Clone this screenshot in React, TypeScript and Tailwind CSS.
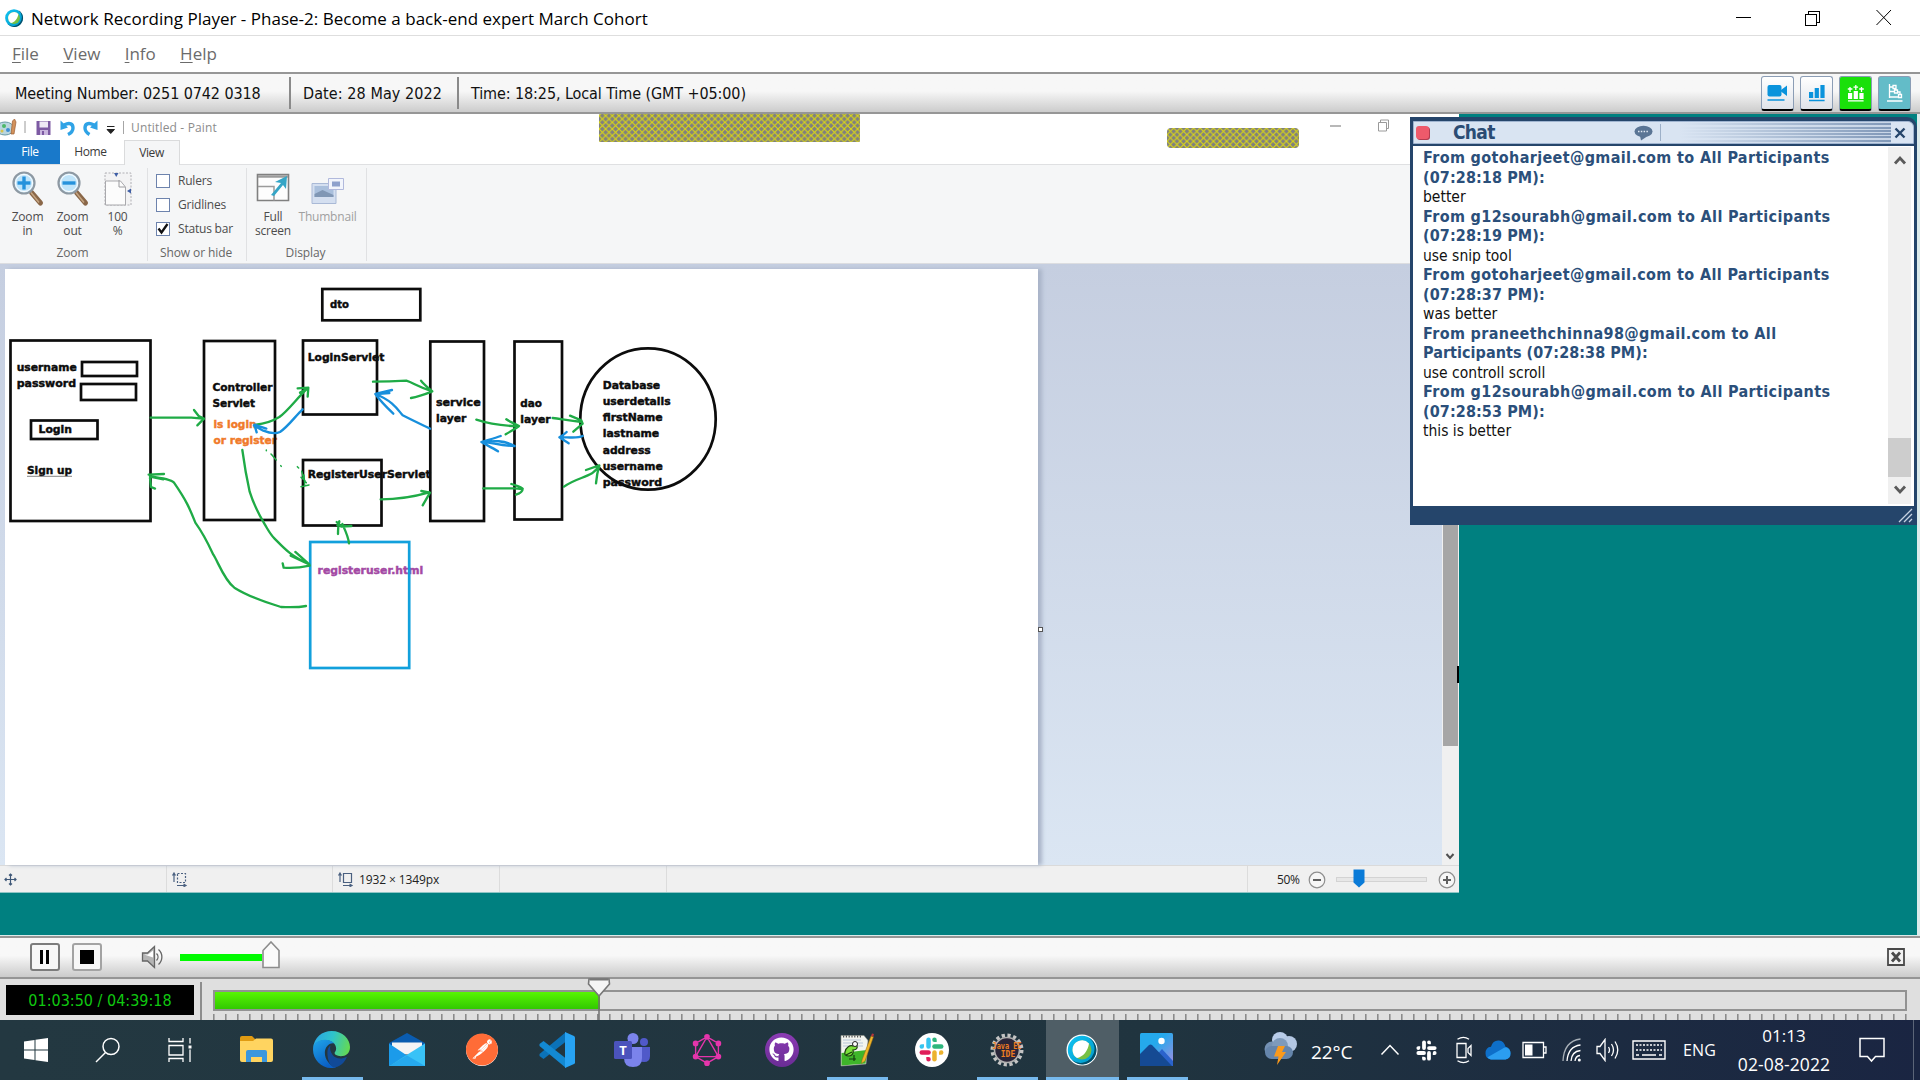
import type { ReactNode } from "react";
import { FaGithub } from "react-icons/fa";
import { SiGraphql, SiPostman } from "react-icons/si";

/* ---------- Title bar and menu ---------- */

function WebexIcon({ size, id }: { size: number; id: string }) {
  return (
    <svg width={size} height={size} viewBox="0 0 32 32">
      <defs>
        <linearGradient id={id} x1="0" y1="0" x2="1" y2="1">
          <stop offset="0" stopColor="#12c3f2" />
          <stop offset="1" stopColor="#0098c9" />
        </linearGradient>
      </defs>
      <circle cx="16" cy="16" r="15.500" fill="#fff" />
      <circle cx="16" cy="16" r="14.200" fill={`url(#${id})`} />
      <path d="M23 3.700A14.200 14.200 0 1 1 6 26a13.500 13.500 0 0 0 17-22.300z" fill="#04506b" />
      <circle cx="16" cy="16" r="9.500" fill="#76c044" />
      <path d="M23 9.500A9.500 9.500 0 0 0 6.500 16 9.500 9.500 0 0 0 11 24c6-1 11-7 12-14.500z" fill="#fff" />
    </svg>
  );
}

function TitleBar() {
  return (
    <div className="flex h-9 items-center border-b border-[#dedede] bg-white">
      <div className="ml-1 h-5 w-5">
        <WebexIcon size={20} id="wx-small" />
      </div>
      <span className="ml-[7px] grow whitespace-nowrap pt-[3px] text-[17px] leading-5 tracking-[0.01px] text-black">
        Network Recording Player - Phase-2: Become a back-end expert March Cohort
      </span>
      <svg className="mr-[26px]" width="160" height="18" viewBox="0 0 160 18" fill="none" stroke="#000" shapeRendering="crispEdges">
        <path d="M2 8.500h15" />
        <path d="M71.500 5.500h11v11h-11zM74.500 5v-2.500h11v11h-3" />
        <path d="M142.500 1l14.500 15M157 1l-14.500 15" shapeRendering="auto" />
      </svg>
    </div>
  );
}

function MenuBar() {
  return (
    <div className="flex h-9 items-center gap-6 bg-white pl-3 text-[17px] leading-5 text-[#6b6b6b]">
      {["File", "View", "Info", "Help"].map((m) => (
        <span key={m} className="mr-[0.300px]">
          <span className="underline underline-offset-2">{m[0]}</span>
          {m.slice(1)}
        </span>
      ))}
    </div>
  );
}

/* ---------- Meeting information bar ---------- */

function PanelButton({ tone, children }: { tone: string; children: ReactNode }) {
  return (
    <div className={`flex h-[35px] w-[33px] items-center justify-center rounded-[3px] border border-b-2 border-[#8b9db5] border-b-black ${tone}`}>
      {children}
    </div>
  );
}

function InfoBar() {
  return (
    <div className="flex h-[42px] items-center border-y-2 border-[#969696] bg-linear-to-b from-[#f7f7f7] from-45% to-[#cccccc] font-['DejaVu_Sans_Condensed'] text-[16px] leading-5 tracking-[-0.1px] text-[#111]">
      <div className="flex h-8 w-[291px] items-center border-r-2 border-[#8a8a8a] pl-[15px] pt-[2px]">Meeting Number: 0251 0742 0318</div>
      <div className="flex h-8 w-[168px] items-center border-r-2 border-[#8a8a8a] pl-[12px] pt-[2px] tracking-[0.08px]">Date: 28 May 2022</div>
      <div className="grow pl-[12px] pt-[2px]">Time: 18:25, Local Time (GMT +05:00)</div>
      <div className="mr-[9px] mt-px flex gap-[6px]">
        <PanelButton tone="bg-linear-to-b from-white to-[#dfe3ea]">
          <svg width="21" height="18" viewBox="0 0 21 18" fill="#0a93dc">
            <rect x="0.500" y="1" width="14" height="11.500" rx="2" />
            <path d="M14 6l6-4.500v10.500l-6-4.500zM0.500 15.200h17v1.600h-17z" />
          </svg>
        </PanelButton>
        <PanelButton tone="bg-linear-to-b from-white to-[#dfe3ea]">
          <svg width="18" height="18" viewBox="0 0 18 18" fill="#0a93dc">
            <path d="M1 8h4.200v6H1zM6.700 4h4.200v10H6.700zM12.400 1h4.200v13h-4.200zM1 15.700h15.600v1.600H1z" />
          </svg>
        </PanelButton>
        <PanelButton tone="bg-[#1ae00a]">
          <svg width="18" height="18" viewBox="0 0 18 18" fill="#fff">
            <path d="M1 9h4.200v6H1zM6.700 7h4.200v8H6.700zM12.400 9h4.200v6h-4.200zM1 16.200h15.600v1.400H1z" />
            <path d="M3 3v5M0.800 5h4.600M8.800 1v5M6.500 3.200h4.600M14.500 3v5M12.200 5h4.600" stroke="#fff" strokeWidth="1.300" />
          </svg>
        </PanelButton>
        <PanelButton tone="bg-[#63bcc8]">
          <svg width="18" height="18" viewBox="0 0 18 18" fill="none" stroke="#fff" strokeWidth="1.300">
            <path d="M3.500 0v14M3.500 3h3M3.500 13h9.500M7 1.500h3v3H7zM8.500 6h3v3h-3zM12.500 10.500h3v3h-3zM3.500 7.500h5M10 4.500V6M14 9v1.500M11.500 8h2.500v1M1 17h15.500" />
          </svg>
        </PanelButton>
      </div>
    </div>
  );
}

/* ---------- Shared Paint window ---------- */

function Hatch({ w, h, rx, dy, id }: { w: number; h: number; rx: number; dy: number; id: string }) {
  return (
    <svg width={w} height={h}>
      <defs>
        <pattern id={id} width="6.630" height="6.630" patternUnits="userSpaceOnUse" y={dy}>
          <rect width="7" height="7" fill="#7f7f80" />
          <path d="M-1-1l9 9M-1 7.630l9-9" stroke="#dbd714" strokeWidth="1.150" />
        </pattern>
      </defs>
      <rect width={w} height={h} rx={rx} fill={`url(#${id})`} />
    </svg>
  );
}

function PaintTitle() {
  return (
    <div className="relative flex h-[26px] items-center bg-white pt-px text-[12px] text-[#8c8c8c]">
      <svg width="120" height="19" viewBox="0 0 120 19">
        <ellipse cx="5" cy="10.500" rx="9" ry="6.500" fill="#b9d6df" stroke="#6a9aa5" />
        <circle cx="4" cy="8" r="2" fill="#4db868" />
        <circle cx="8" cy="12" r="2" fill="#3f8fd4" />
        <circle cx="2" cy="13" r="1.500" fill="#d8c34a" />
        <path d="M11 16l1.500-13 2-2 1.500 3-2 12z" fill="#d2925c" stroke="#9c5e35" strokeWidth="0.700" />
        <path d="M25 3v12" stroke="#9a9a9a" strokeWidth="1" />
        <path d="M36.500 3h14v14h-14z" fill="#7d5aa3" />
        <path d="M39.500 3.500h8.500v6h-8.500z" fill="#eee8f5" />
        <path d="M40 12h8v5h-8z" fill="#c9b6de" />
        <path d="M42 13h2v4h-2z" fill="#7d5aa3" />
        <path d="M64 7c6-3 9-1 9 3 0 3-2 5-5 6.500" fill="none" stroke="#2fa3e6" strokeWidth="3.400" />
        <path d="M60.500 2.500v9.500l7.500-2.500z" fill="#2fa3e6" />
        <path d="M94 7c-6-3-9-1-9 3 0 3 2 5 4.500 6.500" fill="none" stroke="#2fa3e6" strokeWidth="3.400" />
        <path d="M97.500 2.500v9.500l-7.500-2.500z" fill="#2fa3e6" />
        <path d="M107 8.500h7.500M107 11.500h7.500l-3.750 4z" stroke="#222" fill="#222" strokeWidth="1" />
      </svg>
      <span className="ml-[3px] h-[13px] w-px bg-[#a5a5a5]" />
      <span className="ml-[7px] tracking-[0.16px]">Untitled - Paint</span>
      <div className="absolute left-[599px] top-0">
        <Hatch w={261} h={28} rx={1} dy={1.7} id="hatch-a" />
      </div>
      <div className="absolute left-[1167px] top-[14px]">
        <Hatch w={132} h={20} rx={4} dy={0} id="hatch-b" />
      </div>
      <svg className="absolute left-[1328px] top-1" width="64" height="16" viewBox="0 0 64 16" fill="none" stroke="#9a9a9a">
        <path d="M2 8h11" strokeWidth="1.400" />
        <path d="M50.500 4.500h8v8.500h-8zM52.500 4v-2h8v8.500h-2" />
      </svg>
    </div>
  );
}

function PaintTabs() {
  return (
    <div className="flex h-[25px] border-b border-[#dfe0e2] bg-white text-[12px] tracking-[-0.4px]">
      <div className="flex w-[60px] items-center justify-center bg-[#1979ca] text-white">File</div>
      <div className="flex w-16 items-center justify-center pr-[3px] text-[#3a3a3a]">Home</div>
      <div className="-mb-px flex w-[56px] items-center justify-center border border-b-0 border-[#dadbdc] bg-[#f5f6f7] pr-[1px] text-[#3a3a3a]">View</div>
    </div>
  );
}

function Magnifier({ plus }: { plus?: boolean }) {
  return (
    <svg width="34" height="36" viewBox="0 0 34 36">
      <path d="M20.500 21.500l9 10.500" stroke="#8a6748" strokeWidth="5" strokeLinecap="round" />
      <path d="M20 21.500l8 10" stroke="#c5a582" strokeWidth="1.500" />
      <circle cx="13" cy="12" r="10.500" fill="#cdeafb" stroke="#8e99a3" strokeWidth="2.200" />
      <circle cx="13" cy="12" r="8.500" fill="#bfe4fa" stroke="#fff" strokeWidth="1" />
      <path d="M6.500 12h13" stroke="#2692dc" strokeWidth="3.400" />
      {plus && <path d="M13 5.500v13" stroke="#2692dc" strokeWidth="3.400" />}
    </svg>
  );
}

function PageIcon() {
  return (
    <svg width="34" height="36" viewBox="0 0 34 36">
      <path d="M4 2h26v32H4z" fill="#f3f3f4" stroke="#a0a0a5" strokeWidth="0.800" strokeDasharray="2 1.500" />
      <path d="M4.500 10h15l5 6v18h-20z" fill="#fcfcfc" stroke="#a9a9ad" />
      <path d="M18 9v7h6" fill="none" stroke="#9a9a9e" />
      <path d="M13 2h4.500l-2.250 4zM30 17.500v5l-4-2.500z" fill="#3f5fa6" />
    </svg>
  );
}

function FullScreenIcon() {
  return (
    <svg width="34" height="36" viewBox="0 0 34 36">
      <path d="M1.500 3.500h31v26h-31z" fill="#fdfdfd" stroke="#808080" strokeWidth="1.600" />
      <path d="M2 5.500h30" stroke="#9b9b9b" strokeWidth="2.500" />
      <path d="M2 15.500h16v14" fill="none" stroke="#9b9b9b" strokeWidth="1.500" />
      <path d="M15 24l10-12-6-1 12-6-1 13-3-4-9 11z" fill="#35a5c6" />
    </svg>
  );
}

function ThumbnailIcon() {
  return (
    <svg width="36" height="36" viewBox="0 0 36 36">
      <path d="M2 12.500h24v20H2z" fill="#d4dff0" stroke="#a9b9d6" />
      <path d="M4.500 15h19v11h-19z" fill="#a9bfdc" />
      <path d="M4.500 23l8-4 11 5v2h-19z" fill="#8097b5" />
      <path d="M18.500 7.500h15v11h-15z" fill="#f2f5fc" stroke="#b1b9dc" />
      <path d="M22 10.500h8v5h-8z" fill="#8ea1cc" />
    </svg>
  );
}

function Tool({ icon, lines, className }: { icon: ReactNode; lines: string[]; className: string }) {
  return (
    <div className={`flex flex-col items-center whitespace-nowrap leading-[14px] ${className}`}>
      {icon}
      <div className="mt-[3px] text-center">
        {lines.map((l) => (
          <div key={l}>{l}</div>
        ))}
      </div>
    </div>
  );
}

function Group({ label, className, children }: { label: string; className: string; children: ReactNode }) {
  return (
    <div className={`mb-[2px] mt-[3px] flex flex-col border-r border-[#e0e1e3] ${className}`}>
      <div className="flex grow">{children}</div>
      <div className="pr-[2px] text-center leading-[17px] tracking-[-0.1px] text-[#666]">{label}</div>
    </div>
  );
}

function Check({ label, on }: { label: string; on?: boolean }) {
  return (
    <div className="flex h-6 items-center gap-2">
      <span className="flex h-[14px] w-[14px] items-center justify-center border border-[#6d83ad] bg-white">
        {on && (
          <svg width="12" height="12" viewBox="0 0 12 12" fill="none" stroke="#111" strokeWidth="2.300">
            <path d="M1.500 5.500l3 4 6-8.500" />
          </svg>
        )}
      </span>
      {label}
    </div>
  );
}

function Ribbon() {
  return (
    <div className="flex h-[99px] border-b border-[#dcdde0] bg-[#f5f6f7] text-[12px] tracking-[-0.2px] text-[#4c4c4c]">
      <Group label="Zoom" className="w-[148px]">
        <div className="flex pl-[5px] pt-[3px]">
          <Tool icon={<Magnifier plus />} lines={["Zoom", "in"]} className="w-[45px]" />
          <Tool icon={<Magnifier />} lines={["Zoom", "out"]} className="w-[45px]" />
          <Tool icon={<PageIcon />} lines={["100", "%"]} className="w-[45px]" />
        </div>
      </Group>
      <Group label="Show or hide" className="w-[99px]">
        <div className="pl-2 pt-[1px]">
          <Check label="Rulers" />
          <Check label="Gridlines" />
          <Check label="Status bar" on />
        </div>
      </Group>
      <Group label="Display" className="w-[120px]">
        <div className="flex pt-[3px]">
          <Tool icon={<FullScreenIcon />} lines={["Full", "screen"]} className="w-[52px]" />
          <Tool icon={<ThumbnailIcon />} lines={["Thumbnail"]} className="w-[57px] text-[#a0a0a0]" />
        </div>
      </Group>
    </div>
  );
}

/* Free-hand diagram drawn on the Paint canvas */
const boxes: [number, number, number, number, string][] = [
  [10.5, 340.5, 140, 180.5, "#0c0c0c"],
  [82, 362, 55, 14, "#0c0c0c"],
  [81, 384, 55, 16, "#0c0c0c"],
  [31, 420.5, 66.5, 18.5, "#0c0c0c"],
  [204, 341, 71, 179, "#0c0c0c"],
  [303, 340.5, 74, 74, "#0c0c0c"],
  [322.3, 289, 98, 31.3, "#0c0c0c"],
  [303, 460, 78.5, 65.5, "#0c0c0c"],
  [310.2, 542, 99, 126, "#12a0dc"],
  [430.3, 341.5, 53.7, 179.5, "#0c0c0c"],
  [514.5, 341.5, 47.5, 178, "#0c0c0c"],
];

const labels: [string, number, number, number, string][] = [
  ["username", 16.7, 371, 60, "#0c0c0c"],
  ["password", 16.7, 387, 59.5, "#0c0c0c"],
  ["Login", 38.5, 433, 33.5, "#0c0c0c"],
  ["Sign up", 27, 474.3, 45, "#0c0c0c"],
  ["Controller", 212.5, 391.2, 60, "#0c0c0c"],
  ["Servlet", 212.5, 407.2, 42.5, "#0c0c0c"],
  ["is login", 213.5, 428.2, 43, "#f07a2a"],
  ["or register", 213.5, 444.3, 63.5, "#f07a2a"],
  ["LoginServlet", 307.7, 361, 76.7, "#0c0c0c"],
  ["RegisterUserServlet", 307.7, 478, 123, "#0c0c0c"],
  ["dto", 330, 308, 19, "#0c0c0c"],
  ["registeruser.html", 317.6, 574, 105.5, "#a349a4"],
  ["service", 436, 406, 44.7, "#0c0c0c"],
  ["layer", 436, 422, 30.3, "#0c0c0c"],
  ["dao", 520.3, 407, 21.7, "#0c0c0c"],
  ["layer", 520.3, 423, 30.3, "#0c0c0c"],
  ["Database", 602.7, 389.3, 57.5, "#0c0c0c"],
  ["userdetails", 602.7, 405.4, 68, "#0c0c0c"],
  ["firstName", 602.7, 421.4, 60, "#0c0c0c"],
  ["lastname", 602.7, 437.4, 56.5, "#0c0c0c"],
  ["address", 602.7, 453.5, 48, "#0c0c0c"],
  ["username", 602.7, 469.5, 60, "#0c0c0c"],
  ["password", 602.7, 485.5, 59.5, "#0c0c0c"],
];

function Diagram() {
  return (
    <svg width="1032" height="597" viewBox="6 269 1032 597" fill="none" className="block">
      <g fontFamily="DejaVu Sans, sans-serif" fontWeight="700" fontSize="11" strokeWidth="0.450">
        {labels.map(([t, x, y, w, c], i) => (
          <text key={i} x={x} y={y} textLength={w} lengthAdjust="spacingAndGlyphs" fill={c} stroke={c}>
            {t}
          </text>
        ))}
      </g>
      {boxes.map(([x, y, w, h, c], i) => (
        <rect key={i} x={x} y={y} width={w} height={h} stroke={c} strokeWidth="2.700" />
      ))}
      <ellipse cx="648" cy="419" rx="67.700" ry="70.700" stroke="#0c0c0c" strokeWidth="2.700" />
      <path d="M27 476.300h45" stroke="#777" strokeWidth="0.900" />
      <g transform="translate(0 260) scale(.33333)" strokeWidth="7" strokeLinecap="round" strokeLinejoin="round">
        <g stroke="#1fab46">
          <path d="M452 473h122l35 3M582 450l14 18 16 8-20 20" />
          <path d="M768 494c30-3 50-11 70-23 25-18 48-50 78-80M893 385l32-2-2 27M900 398l20-10" />
          <path d="M727 570c8 60 12 80 22 125 14 45 30 72 44 96 15 25 18 32 30 44 30 30 45 50 105 78M886 876l42 37-56-26M848 910l3 13c26 2 50 0 78-6" />
          <path d="M918 1038c-25 5-50 4-75 3-40-12-95-30-140-58-30-22-50-80-63-99-14-30-35-70-54-96-16-40-24-62-64-120-10-10-32-14-70-18M446 644l46-2M450 650l40 8M450 654l3 27 12 5" />
          <path d="M1047 850c-2-20-10-36-20-58M1018 786c-4 12-4 20-4 36M1010 786l14 14 30-2M1018 784l-6 12 24 2" />
          <path d="M799 570v2M813 582c5 5 10 12 16 18M842 617l2 2M892 620l4 4M905 634c5 14 4 26 14 34M903 652l12 10M903 680l24-5M912 645l2 30" strokeWidth="4.500" />
        </g>
        <path d="M908 448c-20 18-42 50-68 68-16 7-30 4-50-4l-28-15M763 494l36 12M764 497l6 20" stroke="#178fdc" />
      </g>
      <g transform="translate(280 260) scale(.33333)" strokeWidth="7" strokeLinecap="round" strokeLinejoin="round">
        <g stroke="#1fab46">
          <path d="M279 365c35 0 66-1 100-3 25 8 24 14 78 32M423 362c8 12 20 20 34 32-20 8-40 16-64 20" />
          <path d="M589 479c30 10 70 18 126 20M679 478c12 8 24 12 38 20-12 10-26 16-40 25" />
          <path d="M818 474c30 4 50 8 88 12M870 467l34 14 4 10-28 24" />
          <path d="M302 718c50 0 90-5 146-21M424 693l26 5-22 38" />
          <path d="M610 685h90c12 0 20 1 26 2M694 672c18 6 30 8 34 14 0 8-8 14-20 18" />
          <path d="M852 680c30-22 60-26 84-40 10-8 16-14 22-22M918 630l40-14c-6 20-8 32-10 54" />
        </g>
        <g stroke="#178fdc">
          <path d="M450 506c-25-12-55-26-82-40-14-16-30-44-82-64M336 390l-50 12c16 22 34 40 54 59M288 402l40-3" />
          <path d="M704 558c-34-18-60-16-98-12M662 528c-20 8-40 12-58 18 14 8 34 18 50 28M610 546c30 2 50 12 94 12" />
          <path d="M908 528c-16 8-36 4-68 3M860 516c-8 8-14 12-22 16l28 18" />
        </g>
      </g>
    </svg>
  );
}

function StatusIcon({ dashed }: { dashed?: boolean }) {
  return (
    <svg width="16" height="15" viewBox="0 0 16 15" fill="none" stroke="#4a6080" strokeWidth="1.200">
      <path d="M2 1v9M0.500 3.500L2 1l1.500 2.500M5 13.500h8M11.500 12l2.500 1.500-2.500 1.300" />
      <path d="M5.500 1.500h8v9h-8z" strokeDasharray={dashed ? "2 1.500" : undefined} />
    </svg>
  );
}

function ZoomKnob({ plus }: { plus?: boolean }) {
  return (
    <svg width="18" height="18" viewBox="0 0 18 18" fill="none">
      <circle cx="9" cy="9" r="7.800" fill="#f6f6f6" stroke="#8e8e8e" strokeWidth="1.200" />
      <path d={plus ? "M5 9h8M9 5v8" : "M5 9h8"} stroke="#606060" strokeWidth="2" />
    </svg>
  );
}

function PaintWindow() {
  return (
    <div className="relative flex h-[779px] w-[1459px] flex-col bg-white">
      <PaintTitle />
      <PaintTabs />
      <Ribbon />
      <div className="flex h-[601px]">
        <div className="relative grow bg-linear-to-b from-[#c5cee0] to-[#dbe6f3] pl-[5px] pt-[5px]">
          <div className="h-[596px] w-[1033px] overflow-hidden bg-white pl-px shadow-[4px_0px_4px_#a9b4c8]">
            <Diagram />
          </div>
          <span className="absolute left-[1038px] top-[363px] h-[5px] w-[5px] border border-[#555] bg-white" />
        </div>
        <div className="flex w-[17px] flex-col bg-[#f0f0f0]">
          <div className="mx-px mt-4 h-[466px] bg-[#a6a6a6]" />
          <div className="grow" />
          <svg className="mb-1 ml-[3px]" width="10" height="10" viewBox="0 0 10 10" fill="none" stroke="#505050" strokeWidth="2">
            <path d="M1.500 3l3.500 4 3.500-4" />
          </svg>
        </div>
      </div>
      <div className="flex h-[28px] items-center border-b border-t border-[#dadada] border-b-[#8fc5c5] bg-[#f0f0f0] text-[12px] text-[#222]">
        <div className="flex h-full w-[167px] items-center border-r border-[#dcdcdc] pl-1">
          <svg width="13" height="13" viewBox="0 0 13 13" fill="none" stroke="#3f5878" strokeWidth="1.200">
            <path d="M6.500 1v11M1 6.500h11M5 2.500L6.500 1 8 2.500M5 10.500L6.500 12 8 10.500M2.500 5L1 6.500 2.500 8M10.500 5L12 6.500 10.500 8" />
          </svg>
        </div>
        <div className="flex h-full w-[166px] items-center border-r border-[#dcdcdc] pl-[5px]">
          <StatusIcon dashed />
        </div>
        <div className="flex h-full w-[167px] items-center gap-[5px] border-r border-[#dcdcdc] pl-[5px] pt-px tracking-[-0.12px]">
          <StatusIcon />
          1932 × 1349px
        </div>
        <div className="h-full w-[167px] border-r border-[#dcdcdc]" />
        <div className="h-full w-[581px] border-r border-[#dcdcdc]" />
        <div className="flex items-center pl-[29px] pt-px">
          <span className="w-[31px] tracking-[-0.3px]">50%</span>
          <ZoomKnob />
          <div className="relative ml-[10px] mr-[11px] h-[5px] w-[91px] border border-[#d3d3d3] bg-[#e7e7e7]">
            <svg className="absolute -top-[9px] left-[16px]" width="12" height="19" viewBox="0 0 12 19">
              <path d="M0.500 0.500h11v13l-5.500 5-5.500-5z" fill="#0a7bd8" />
            </svg>
          </div>
          <ZoomKnob plus />
        </div>
      </div>
      <span className="absolute left-[1457px] top-[552px] h-[17px] w-[2px] bg-black" />
    </div>
  );
}

/* ---------- Chat panel ---------- */

const messages: [string[], string][] = [
  [["From gotoharjeet@gmail.com to All Participants", "(07:28:18 PM):"], "better"],
  [["From g12sourabh@gmail.com to All Participants", "(07:28:19 PM):"], "use snip tool"],
  [["From gotoharjeet@gmail.com to All Participants", "(07:28:37 PM):"], "was better"],
  [["From praneethchinna98@gmail.com to All", "Participants (07:28:38 PM):"], "use controll scroll"],
  [["From g12sourabh@gmail.com to All Participants", "(07:28:53 PM):"], "this is better"],
];

function ChatPanel() {
  return (
    <div className="absolute left-[1410px] top-[3px] flex h-[408px] w-[507px] flex-col rounded-tr-[10px] border-x-3 border-t-4 border-[#25456b] bg-[#25456b] font-['DejaVu_Sans_Condensed']">
      <div className="flex h-[23px] items-center overflow-hidden rounded-tr-[6px] border border-[#9fb4d0] bg-[#d9e4f2]">
        <span className="ml-[2px] h-[13px] w-[13px] rounded-[3px] bg-[#ee5a6b] shadow-[1px_1px_0_#b23c50]" />
        <span className="ml-6 w-[181px] text-[19px] font-bold leading-none tracking-[-0.7px] text-[#2b4c74]">Chat</span>
        <svg width="20" height="16" viewBox="0 0 20 16">
          <ellipse cx="9.500" cy="6.500" rx="9" ry="5.800" fill="#5a7595" />
          <path d="M6 11l1 4.500 6-4z" fill="#5a7595" />
          <path d="M4 6.500h11" stroke="#dfe8f3" strokeWidth="1.400" strokeDasharray="1.500 1.300" />
        </svg>
        <span className="ml-[6px] h-[17px] w-px bg-[#9db0c8]" />
        <div className="h-full grow bg-[linear-gradient(90deg,#d9e4f2_8%,#d9e4f200_100%),repeating-linear-gradient(180deg,#c9d6e7_0px,#c9d6e7_1.3px,#8098b8_1.3px,#8098b8_3.3px)]" />
        <svg className="ml-[3px] mr-[7px]" width="12" height="12" viewBox="0 0 12 12" stroke="#25456b" strokeWidth="2.400">
          <path d="M1.500 1.500l9 9M10.500 1.500l-9 9" />
        </svg>
      </div>
      <div className="mt-[2px] flex h-[360px] bg-white">
        <div className="grow whitespace-nowrap pl-[10px] pt-[2px] text-[15.5px] leading-[19.5px] text-[#111]">
          {messages.map(([head, body], i) => (
            <div key={i}>
              {head.map((h) => (
                <div key={h} className={`text-[16px] font-bold text-[#2b4f7a] ${h.startsWith("(") ? "tracking-[0.1px]" : h.startsWith("P") ? "tracking-[0.05px]" : "tracking-[0.36px]"}`}>
                  {h}
                </div>
              ))}
              <div className="relative top-px">{body}</div>
            </div>
          ))}
        </div>
        <div className="mr-[3px] mt-px flex h-[357px] w-[23px] flex-col items-center bg-[#f0f0f0]">
          <svg className="mt-[7px]" width="14" height="12" viewBox="0 0 14 12" fill="none" stroke="#5a5a5a" strokeWidth="2.800">
            <path d="M2 9.500l5-5.500 5 5.500" />
          </svg>
          <div className="mt-[272px] h-[39px] w-full bg-[#cdcdcd]" />
          <svg className="mt-[7px]" width="14" height="12" viewBox="0 0 14 12" fill="none" stroke="#5a5a5a" strokeWidth="2.800">
            <path d="M2 2.500l5 5.500 5-5.500" />
          </svg>
        </div>
      </div>
      <svg className="ml-auto mt-[2px]" width="16" height="15" viewBox="0 0 16 15" stroke="#c6d2e2" strokeWidth="1.300">
        <path d="M1 14L14 1M6 14l8-8M11 14l3-3" />
      </svg>
    </div>
  );
}

/* ---------- Player controls ---------- */

function Controls() {
  return (
    <div className="flex h-[43px] items-center border-b-2 border-t-2 border-[#959595] bg-linear-to-b from-[#f8f8f8] from-45% to-[#cbcbcb]">
      <div className="-mt-px ml-[30px] flex h-7 w-[30px] items-center justify-center gap-[3px] rounded-[3px] border-2 border-[#7c7c7c] bg-[#f7f7f7] pr-px">
        <span className="h-[14px] w-[3px] bg-black" />
        <span className="h-[14px] w-[3px] bg-black" />
      </div>
      <div className="-mt-px ml-3 flex h-7 w-[30px] items-center justify-center rounded-[3px] border-2 border-[#a3a3a3] bg-[#f7f7f7] pr-px">
        <span className="h-[14px] w-[14px] bg-black" />
      </div>
      <svg className="-mt-[2px] ml-[39px]" width="23" height="24" viewBox="0 0 23 24" fill="none" stroke="#666" strokeWidth="1.300">
        <path d="M1.500 8h5l7-6.500v21l-7-6.500h-5z" fill="#b5b5b5" />
        <path d="M3 9.500h4l5-4v7z" fill="#fff" stroke="none" />
        <path d="M15.500 8.500c2 2 2 5 0 7M17.500 4.500c4.500 4 4.500 11 0 15" />
      </svg>
      <div className="ml-[16px] h-[7px] w-[82px] bg-[#00fb00]" />
      <svg className="-mt-[5px]" width="18" height="28" viewBox="0 0 18 28">
        <path d="M1 26.500v-17L9 1l8 8.500v17z" fill="#fafafa" stroke="#8c8c8c" strokeWidth="1.600" />
      </svg>
      <svg className="-mt-px ml-auto mr-[15px]" width="18" height="18" viewBox="0 0 18 18" fill="#f2f2f2" stroke="#4a4a4a">
        <path d="M1 1h16v16H1z" strokeWidth="1.800" />
        <path d="M5 4.500l8 9M13 4.500l-8 9" strokeWidth="2.800" />
      </svg>
    </div>
  );
}

const ticks = Array.from({ length: 142 }, (_, i) => 0.8 + i * 12);

function Timeline() {
  return (
    <div className="flex h-[41px] bg-[#dfdfdf]">
      <div className="ml-[6px] mt-[6px] flex h-[30px] w-[188px] items-center justify-center bg-black pt-px font-['DejaVu_Sans_Condensed'] text-[16px] text-[#10c810]">
        01:03:50 / 04:39:18
      </div>
      <div className="ml-[6px] mt-[3px] h-[38px] w-[2px] bg-[#8d8d8d]" />
      <div className="relative ml-[11px] w-[1694px]">
        <div className="mt-[11px] h-[21px] border-2 border-[#929292]">
          <div className="h-full w-[385px] bg-linear-to-b from-[#57f503] to-[#31c900]" />
        </div>
        <svg className="mt-[3px] block" width="1694" height="6">
          {ticks.map((x) => (
            <path key={x} d={`M${x} 0v6`} stroke="#8b8b8b" strokeWidth="1.600" />
          ))}
        </svg>
        <svg className="absolute -top-px left-[374px]" width="24" height="42" viewBox="0 0 24 42">
          <path d="M12 16v26" stroke="#6f6f6f" strokeWidth="1.500" />
          <path d="M2 1h20l0.500 5-10.500 12L1.500 6z" fill="#f5f5f5" stroke="#777" strokeWidth="1.600" />
          <path d="M3 1.500h18" stroke="#777" strokeWidth="2" />
        </svg>
      </div>
    </div>
  );
}

/* ---------- Windows taskbar ---------- */

function StartIcon() {
  return (
    <svg width="24" height="24" viewBox="0 0 24 24" fill="#fff">
      <path d="M0 3.500L10.500 2v9.500H0zM11.500 1.800L24 0v11.500H11.500zM0 12.500h10.500V22L0 20.500zM11.500 12.500H24V24l-12.500-1.800z" />
    </svg>
  );
}

function SearchIcon() {
  return (
    <svg width="26" height="26" viewBox="0 0 26 26" fill="none" stroke="#fff" strokeWidth="1.500">
      <circle cx="16" cy="9.500" r="8" />
      <path d="M10.500 15.500L1 25" />
    </svg>
  );
}

function TaskViewIcon() {
  return (
    <svg width="24" height="24" viewBox="0 0 24 24" fill="none" stroke="#fff" strokeWidth="1.300">
      <path d="M1 0v3.500h14V0M1 24v-3.500h14V24M1 7.500h14v9.500H1zM22 0v5.500M22 11.500V24" />
      <path d="M20.500 7.500h3v3h-3z" fill="#fff" stroke="none" />
    </svg>
  );
}

function ExplorerIcon() {
  return (
    <svg width="33" height="27" viewBox="0 0 33 27">
      <path d="M0 2q0-2 2-2h10l3 3v5H0z" fill="#e09b12" />
      <path d="M0 5h13l3-2.500h15q2 0 2 2V24q0 2-2 2H2q-2 0-2-2z" fill="#ffd460" />
      <path d="M6 26V16q0-2 2-2h17q2 0 2 2v10h-5v-5H11v5z" fill="#3b97dd" />
    </svg>
  );
}

function EdgeIcon() {
  return (
    <svg width="37" height="37" viewBox="0 0 36 36">
      <defs>
        <linearGradient id="edge-top" x1="0" y1="0.300" x2="1" y2="0.500">
          <stop offset="0" stopColor="#2aa5e4" />
          <stop offset="0.500" stopColor="#2fc4cb" />
          <stop offset="1" stopColor="#63d955" />
        </linearGradient>
        <linearGradient id="edge-mid" x1="0" y1="0" x2="0.500" y2="1">
          <stop offset="0" stopColor="#1fa5ea" />
          <stop offset="1" stopColor="#0a5fc4" />
        </linearGradient>
      </defs>
      <path d="M0 17C1 6 9 0 18 0c11 0 18 8 18 15.500 0 6-4 9-9 9-4 0-6-1.500-6-3 0-1 1.500-2 1.500-4.500 0-5-5-8-10.500-8C6 9 1.500 12 0 17z" fill="url(#edge-top)" />
      <path d="M0 18c0-6 5-9.500 11.500-9.500 4 0 7 1.200 9 3.500-5-1-9 4-9 9 0 7 5 13 11 14.500-2 .5-4 .5-5 .5C8 36 0 28 0 18z" fill="url(#edge-mid)" />
      <path d="M14 21c0-3 1-5.500 3-7-1 3 0 6 2 9 3 4 8 5 14 2-2 6-8 10.500-13 10.500-4-2-6-8-6-14.500z" fill="#114a97" />
    </svg>
  );
}

function MailIcon() {
  return (
    <svg width="36" height="33" viewBox="0 0 36 33">
      <path d="M0 10L18 0l18 10v4H0z" fill="#0a5cb0" />
      <path d="M3 9.500h30v12H3z" fill="#f4f4f5" />
      <path d="M0 10.500l18 12L0 33z" fill="#1b9bea" />
      <path d="M36 10.500V33H0z" fill="#39c2f7" />
      <path d="M0 33l18-10.500L36 33z" fill="#26a9ee" />
    </svg>
  );
}

function PostmanIcon() {
  return (
    <span className="flex h-[32px] w-[32px] items-center justify-center rounded-full bg-white">
      <SiPostman size={33} color="#ff6c37" />
    </span>
  );
}

function VsCodeIcon() {
  return (
    <svg width="36" height="36" viewBox="0 0 36 36">
      <path d="M27 0v9.500L4.500 27 0.500 24v-2z" fill="#0b72b8" />
      <path d="M27 36v-9.500L4.500 9 0.500 12v2z" fill="#1389d2" />
      <path d="M26 0l9 4q1 .5 1 1.500v25q0 1-1 1.500l-9 4z" fill="#27a3f3" />
    </svg>
  );
}

function TeamsIcon() {
  return (
    <svg width="36" height="34" viewBox="0 0 36 34">
      <circle cx="30" cy="9" r="4" fill="#5059c9" />
      <path d="M24 14h12v9q0 6-6 6t-6-6z" fill="#5059c9" />
      <circle cx="19" cy="5.500" r="5.500" fill="#7b83eb" />
      <path d="M10 14h18v11q0 9-9 9t-9-9z" fill="#7b83eb" />
      <rect y="8" width="18" height="18" rx="1.500" fill="#4b53bc" />
      <text x="9" y="21.500" textAnchor="middle" fontFamily="Open Sans, sans-serif" fontWeight="700" fontSize="13" fill="#fff">
        T
      </text>
    </svg>
  );
}

function NotepadIcon() {
  return (
    <svg width="34" height="34" viewBox="0 0 34 34">
      <path d="M1 2.500h23l4 5-2 23.500-25 2z" fill="#f2f4ef" stroke="#8d9288" strokeWidth="0.600" />
      <path d="M1.500 20l25.500-3-1.500 13.500-24 2z" fill="#3fb52a" />
      <path d="M3 7h18M3 10h20M3 13h20" stroke="#b7c6d8" />
      <path d="M3 3.500h19" stroke="#555" strokeWidth="2" strokeDasharray="1.200 1.600" />
      <path d="M5 19c1-5 5-7 8-6 1-3 4-2 4 0 1 3-2 4-4 4 1 3-1 6-4 6s-5-1-4-4z" fill="#7be03a" stroke="#1c3a12" strokeWidth="1.200" />
      <circle cx="15" cy="11" r="2.500" fill="#fff" stroke="#222" />
      <path d="M9 26h7M14 22v6M6 22l6-3" stroke="#153d10" strokeWidth="1.200" />
      <path d="M22 27l9-24 2.500.8L25 28l-3.500 2.500z" fill="#f0b429" stroke="#8a6514" strokeWidth="0.500" />
      <path d="M31 3l1-2.500 2 .6-.8 2.600z" fill="#b7353a" />
    </svg>
  );
}

function SlackMark({ size, colors }: { size: number; colors: [string, string, string, string] }) {
  const arm = (c: string, deg: number) => (
    <g fill={c} transform={`rotate(${deg} 12 12)`}>
      <rect x="7" y="0.500" width="4.300" height="10.800" rx="2.150" />
      <path d="M0.500 9.150a2.150 2.150 0 0 1 2.150-2.150h2.150v2.150a2.150 2.150 0 0 1-4.300 0z" />
    </g>
  );
  return (
    <svg width={size} height={size} viewBox="0 0 24 24">
      {arm(colors[0], 90)}
      {arm(colors[1], 180)}
      {arm(colors[2], 270)}
      {arm(colors[3], 0)}
    </svg>
  );
}

function JavaIdeIcon() {
  return (
    <svg width="34" height="34" viewBox="0 0 34 34">
      <circle cx="17" cy="17" r="14.700" fill="none" stroke="#c4c4c4" strokeWidth="3.600" strokeDasharray="3.200 2.573" />
      <circle cx="17" cy="17" r="12.500" fill="#2a2538" stroke="#b0b0b0" strokeWidth="1.600" />
      <g fontFamily="DejaVu Sans Mono, monospace" fontWeight="700" fontSize="8" fill="#ee7d22" textAnchor="middle">
        <text x="17" y="15.500" textLength="29" lengthAdjust="spacingAndGlyphs">
          Java EE
        </text>
        <text x="18" y="24">
          IDE
        </text>
      </g>
    </svg>
  );
}

function PhotosIcon() {
  return (
    <svg width="33" height="33" viewBox="0 0 33 33">
      <defs>
        <linearGradient id="photo-sky" x1="0" y1="0" x2="1" y2="1">
          <stop offset="0.400" stopColor="#25a9ec" />
          <stop offset="1" stopColor="#a58be0" />
        </linearGradient>
      </defs>
      <rect width="33" height="33" rx="1.500" fill="url(#photo-sky)" />
      <path d="M14 25l8-9 11 12v5H14z" fill="#2b63cc" />
      <path d="M0 21l9-9q1.500-1 3 0l20 21H0z" fill="#154a93" />
      <circle cx="21.500" cy="8" r="3.200" fill="#fff" />
    </svg>
  );
}

function TaskButton({ children, open, active }: { children: ReactNode; open?: boolean; active?: boolean }) {
  return (
    <div className={`mx-px flex h-full w-[73px] flex-col items-center ${active ? "bg-[#4f5e66]" : ""}`}>
      <div className="flex h-[57px] items-center justify-center pr-[2px] pt-[2px]">{children}</div>
      {(open || active) && <div className={`h-[3px] bg-[#76b9ed] ${active ? "w-full" : "w-[61px]"}`} />}
    </div>
  );
}

function Tray() {
  return (
    <div className="flex grow items-center whitespace-nowrap pl-[69px] text-white">
      <svg className="-mt-[3px]" width="34" height="36" viewBox="0 0 34 36">
        <circle cx="16" cy="9" r="8" fill="#b9cdea" />
        <circle cx="25" cy="13" r="8" fill="#b4c8e4" />
        <circle cx="8" cy="18" r="7.500" fill="#7491b3" />
        <circle cx="16" cy="15" r="8" fill="#7e9abb" />
        <rect x="1" y="15" width="28" height="13" rx="6.500" fill="#6585ab" />
        <path d="M14 15h7l-3 6h4l-9 13 1.500-8.500H10z" fill="#fb9a1c" />
      </svg>
      <span className="ml-[13px] mt-[4px] w-[69px] text-[19px] tracking-[-0.1px]">22°C</span>
      <svg className="mr-[16px]" width="20" height="12" viewBox="0 0 20 12" fill="none" stroke="#fff" strokeWidth="1.500">
        <path d="M1.500 10.500l8.500-9 8.500 9" />
      </svg>
      <SlackMark size={21} colors={["#fff", "#fff", "#fff", "#fff"]} />
      <svg className="ml-[17px]" width="20" height="28" viewBox="0 0 20 28" fill="none" stroke="#fff" strokeWidth="1.300">
        <path d="M3 7.500h9v14H3zM14 12.500l3-3v10l-3-3zM3.500 3.200Q9.500-.5 15 3.200M3.500 24.800q6 3.700 11.500 0" />
      </svg>
      <svg className="ml-[11px]" width="26" height="20" viewBox="0 0 26 18" preserveAspectRatio="none">
        <path d="M6 6q2-6 8-5.500 5 .5 6.500 5.500 5 1 5 6 0 5-5 5.500H6Q.5 17 .5 12 .5 6.500 6 6z" fill="#0e6fc9" />
        <path d="M2.500 15.500L17 8q2-1.500 4-1.500 4.500 1.500 4.500 5.500 0 5-5 5.500H6q-2.500-.5-3.500-2z" fill="#2b9df0" />
      </svg>
      <svg className="ml-[11px]" width="25" height="18" viewBox="0 0 25 18" fill="none" stroke="#fff" strokeWidth="1.300">
        <path d="M1 1.500h20.500v15H1zM22 6h2v6h-2" />
        <path d="M3 3.500h7.500v11H3z" fill="#fff" stroke="none" />
      </svg>
      <svg className="ml-[15px]" width="20" height="24" viewBox="0 0 20 24" fill="none" stroke="#fff" strokeWidth="1.300">
        <path d="M1 23Q2 3 18.500 1" stroke="#a8b0b8" />
        <path d="M5 23Q6 8.500 18.500 7M9 23q.5-9.500 9.500-10.500M13 23q.5-5 5-5.500" />
        <circle cx="17.300" cy="22" r="1.500" fill="#fff" stroke="none" />
      </svg>
      <svg className="ml-[14px]" width="24" height="24" viewBox="0 0 24 24" fill="none" stroke="#fff" strokeWidth="1.300">
        <path d="M1 8.500h3l5-7v21l-5-7H1zM12.500 9q2 3 0 6M15.500 6q4 6 0 12M19 3.500q5.500 8.500 0 17" />
      </svg>
      <svg className="ml-[12px]" width="34" height="20" viewBox="0 0 34 20" fill="none" stroke="#fff" strokeWidth="1.400">
        <path d="M1 1h32v18H1z" />
        <path d="M4 5h26M4 10h26" strokeDasharray="2 1.500" />
        <path d="M4 15h3M10 15h14M27 15h3" />
      </svg>
      <span className="ml-[17px] w-[54px] text-[16px] tracking-[0.14px]">ENG</span>
      <div className="w-[94px] text-center leading-[28px]">
        <div className="text-[17px]">01:13</div>
        <div className="text-[17.5px] tracking-[0.1px]">02-08-2022</div>
      </div>
      <svg className="ml-[28px]" width="26" height="26" viewBox="0 0 26 26" fill="none" stroke="#fff" strokeWidth="1.500">
        <path d="M1 1.500h24v18h-8.500l-4 4.500-4-4.500H1z" />
      </svg>
      <span className="ml-auto mr-[6px] h-[60px] w-px bg-[#5b6578]" />
    </div>
  );
}

function Taskbar() {
  return (
    <div className="flex h-[60px] bg-linear-to-r from-[#233841] via-[#20343f] via-60% to-[#1a2542]">
      <div className="flex w-[220px] items-center pl-6">
        <StartIcon />
        <span className="ml-[47px]">
          <SearchIcon />
        </span>
        <span className="ml-[47px]">
          <TaskViewIcon />
        </span>
      </div>
      <TaskButton>
        <ExplorerIcon />
      </TaskButton>
      <TaskButton open>
        <EdgeIcon />
      </TaskButton>
      <TaskButton>
        <MailIcon />
      </TaskButton>
      <TaskButton>
        <PostmanIcon />
      </TaskButton>
      <TaskButton>
        <VsCodeIcon />
      </TaskButton>
      <TaskButton>
        <TeamsIcon />
      </TaskButton>
      <TaskButton>
        <SiGraphql size={32} color="#e535ab" />
      </TaskButton>
      <TaskButton>
        <span className="flex h-[34px] w-[34px] items-center justify-center rounded-full bg-linear-to-b from-[#8c3cb4] to-[#6a2c95]">
          <FaGithub size={25} color="#fff" />
        </span>
      </TaskButton>
      <TaskButton open>
        <NotepadIcon />
      </TaskButton>
      <TaskButton>
        <span className="flex h-[34px] w-[34px] items-center justify-center rounded-full bg-white">
          <SlackMark size={25} colors={["#2eb67d", "#ecb22e", "#e01e5a", "#36c5f0"]} />
        </span>
      </TaskButton>
      <TaskButton open>
        <JavaIdeIcon />
      </TaskButton>
      <TaskButton active>
        <WebexIcon size={32} id="wx-large" />
      </TaskButton>
      <TaskButton open>
        <PhotosIcon />
      </TaskButton>
      <Tray />
    </div>
  );
}

export default function App() {
  return (
    <div className="h-[1080px] w-[1920px] overflow-hidden bg-white font-['Open_Sans']">
      <TitleBar />
      <MenuBar />
      <InfoBar />
      <div className="relative h-[822px] border-b border-r-3 border-[#dcebeb] bg-[#008080]">
        <PaintWindow />
        <ChatPanel />
      </div>
      <Controls />
      <Timeline />
      <Taskbar />
    </div>
  );
}
